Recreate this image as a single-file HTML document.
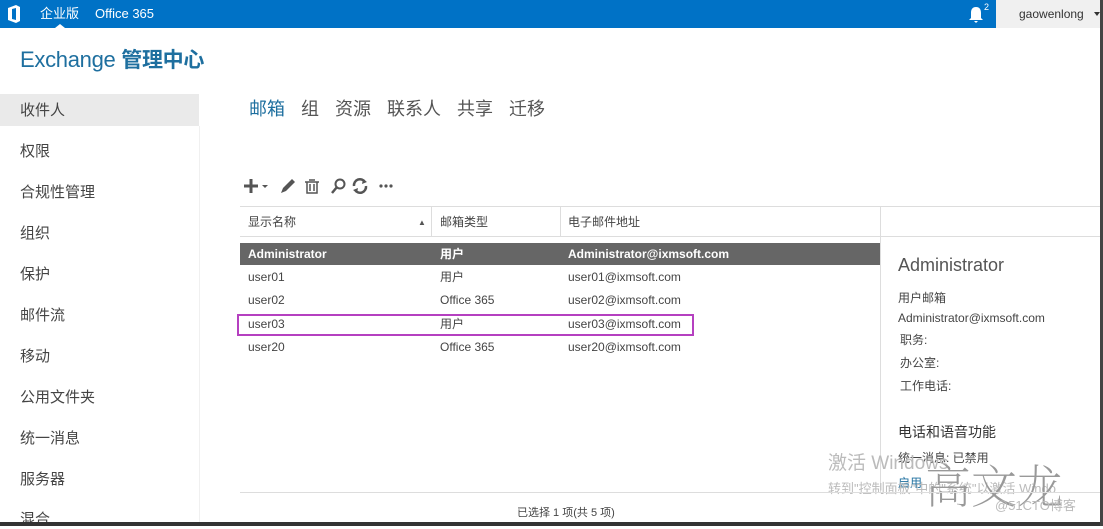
<!DOCTYPE html>
<html><head><meta charset="utf-8"><style>
*{margin:0;padding:0;box-sizing:border-box}
body{width:1103px;height:526px;overflow:hidden;background:#fff;font-family:"Liberation Sans","Noto Sans CJK SC",sans-serif;color:#333;position:relative}
.a{position:absolute;white-space:nowrap;line-height:1.2}
.top{left:0;top:0;width:1103px;height:28px;background:#0072c6}
.side div{position:absolute;left:20px;font-size:15px;color:#444;line-height:1.2}
.row{font-size:12px;color:#444;line-height:14px}
</style></head><body>
<div class="a top"></div>
<svg class="a" style="left:7px;top:5px" width="14" height="18" viewBox="0 0 14 18"><path d="M1 3 L9 0 L13 2 L13 16 L9 18 L1 15 Z M5 4 L5 14 L9 15 L9 3 Z" fill="#fff" fill-rule="evenodd"/></svg>
<div class="a" style="left:40px;top:6px;color:#fff;font-size:13px">企业版</div>
<div class="a" style="left:55px;top:24px;width:0;height:0;border-left:5px solid transparent;border-right:5px solid transparent;border-bottom:4px solid #fff"></div>
<div class="a" style="left:95px;top:6px;color:#fff;font-size:13px">Office 365</div>
<svg class="a" style="left:966px;top:5px" width="20" height="20" viewBox="0 0 20 20"><path d="M10 2 C6 2 5 5 5 8 L5 13 L3 15 L17 15 L15 13 L15 8 C15 5 14 2 10 2 Z M8 16 L12 16 L10 18 Z" fill="#fff"/></svg>
<div class="a" style="left:984px;top:2px;color:#fff;font-size:9px">2</div>
<div class="a" style="left:996px;top:0;width:107px;height:28px;background:#f0f0f0"></div>
<div class="a" style="left:1019px;top:7px;font-size:12px;color:#333">gaowenlong</div>
<div class="a" style="left:1094px;top:12px;border-left:3px solid transparent;border-right:3px solid transparent;border-top:4px solid #333"></div>
<div class="a" style="left:20px;top:47px;font-size:22px;color:#1e6f9f;letter-spacing:-0.3px">Exchange <span style="font-weight:bold;font-size:21px">管理中心</span></div>
<div class="a" style="left:0;top:94px;width:199px;height:32px;background:#eaeaea"></div>
<div class="a" style="left:199px;top:126px;width:1px;height:400px;background:#f0f0f0"></div>
<div class="side">
<div style="top:102px">收件人</div><div style="top:143px">权限</div><div style="top:184px">合规性管理</div><div style="top:225px">组织</div><div style="top:266px">保护</div><div style="top:307px">邮件流</div><div style="top:348px">移动</div><div style="top:389px">公用文件夹</div><div style="top:430px">统一消息</div><div style="top:471px">服务器</div><div style="top:511px">混合</div>
</div>
<div class="a" style="left:249px;top:99px;font-size:18px;color:#555;word-spacing:11px"><span style="color:#1e6f9f">邮箱</span> 组 资源 联系人 共享 迁移</div>
<svg class="a" style="left:243px;top:176px" width="155" height="20" viewBox="0 0 155 20"><path d="M1 10 H15 M8 3 V17" stroke="#555" stroke-width="3"/><path d="M19 9 L25 9 L22 12 Z" fill="#555"/><path d="M38 17 L40 12 L49 3 L52 6 L43 15 Z" fill="#555"/><path d="M62 6 H76 M64 6 V17 H74 V6 M67 8 V15 M71 8 V15 M66 4 H72" stroke="#555" stroke-width="1.5" fill="none"/><circle cx="97" cy="8" r="4.5" stroke="#555" stroke-width="2" fill="none"/><path d="M94 11 L89 17" stroke="#555" stroke-width="2.5"/><path d="M111 10 A6 6 0 0 1 122 6 M123 10 A6 6 0 0 1 112 14" stroke="#555" stroke-width="2.5" fill="none"/><path d="M120 3 L124 6 L119 8 Z M114 17 L110 14 L115 12 Z" fill="#555"/><circle cx="138" cy="10" r="1.6" fill="#555"/><circle cx="143" cy="10" r="1.6" fill="#555"/><circle cx="148" cy="10" r="1.6" fill="#555"/></svg>
<div class="a" style="left:240px;top:206px;width:863px;height:1px;background:#ddd"></div>
<div class="a" style="left:240px;top:236px;width:863px;height:1px;background:#ddd"></div>
<div class="a" style="left:431px;top:207px;width:1px;height:29px;background:#ddd"></div>
<div class="a" style="left:560px;top:207px;width:1px;height:29px;background:#ddd"></div>
<div class="a" style="left:880px;top:207px;width:1px;height:285px;background:#ddd"></div>
<div class="a row" style="left:248px;top:215px">显示名称</div>
<div class="a" style="left:418px;top:218px;font-size:8px;color:#555">▲</div>
<div class="a row" style="left:440px;top:215px">邮箱类型</div>
<div class="a row" style="left:568px;top:215px">电子邮件地址</div>
<div class="a" style="left:240px;top:243px;width:640px;height:22px;background:#666"></div>
<div class="a row" style="left:248px;top:247px;color:#fff;font-weight:bold">Administrator</div>
<div class="a row" style="left:440px;top:247px;color:#fff;font-weight:bold">用户</div>
<div class="a row" style="left:568px;top:247px;color:#fff;font-weight:bold">Administrator@ixmsoft.com</div>
<div class="a row" style="left:248px;top:270px">user01</div><div class="a row" style="left:440px;top:270px">用户</div><div class="a row" style="left:568px;top:270px">user01@ixmsoft.com</div>
<div class="a row" style="left:248px;top:293px">user02</div><div class="a row" style="left:440px;top:293px">Office 365</div><div class="a row" style="left:568px;top:293px">user02@ixmsoft.com</div>
<div class="a row" style="left:248px;top:317px">user03</div><div class="a row" style="left:440px;top:317px">用户</div><div class="a row" style="left:568px;top:317px">user03@ixmsoft.com</div>
<div class="a row" style="left:248px;top:340px">user20</div><div class="a row" style="left:440px;top:340px">Office 365</div><div class="a row" style="left:568px;top:340px">user20@ixmsoft.com</div>
<div class="a" style="left:237px;top:314px;width:457px;height:22px;border:2px solid #b540c0"></div>
<div class="a" style="left:898px;top:255px;font-size:18px;color:#555">Administrator</div>
<div class="a row" style="left:898px;top:291px">用户邮箱</div>
<div class="a row" style="left:898px;top:311px">Administrator@ixmsoft.com</div>
<div class="a row" style="left:900px;top:333px">职务:</div>
<div class="a row" style="left:900px;top:356px">办公室:</div>
<div class="a row" style="left:900px;top:379px">工作电话:</div>
<div class="a" style="left:898px;top:424px;font-size:14px;color:#333">电话和语音功能</div>
<div class="a row" style="left:898px;top:451px">统一消息: 已禁用</div>
<div class="a row" style="left:898px;top:476px;color:#1e6f9f">启用</div>
<div class="a" style="left:828px;top:453px;font-size:19px;color:#bbb">激活 Windows</div>
<div class="a" style="left:828px;top:481px;font-size:13px;color:#bbb">转到"控制面板"中的"系统"以激活 Windo</div>
<div class="a" style="left:925px;top:457px;font-size:46px;color:#999;font-family:'Noto Serif CJK SC',serif;font-weight:200">高文龙</div>
<div class="a" style="left:995px;top:498px;font-size:13px;color:#bbb">@51CTO博客</div>
<div class="a" style="left:240px;top:492px;width:641px;height:1px;background:#ddd"></div>
<div class="a" style="left:881px;top:492px;width:222px;height:1px;background:#ddd"></div>
<div class="a" style="left:517px;top:507px;font-size:11px;color:#444">已选择 1 项(共 5 项)</div>
<div class="a" style="left:0;top:522px;width:1103px;height:4px;background:#333"></div>
<div class="a" style="left:1100px;top:0;width:3px;height:526px;background:#444"></div>
</body></html>
